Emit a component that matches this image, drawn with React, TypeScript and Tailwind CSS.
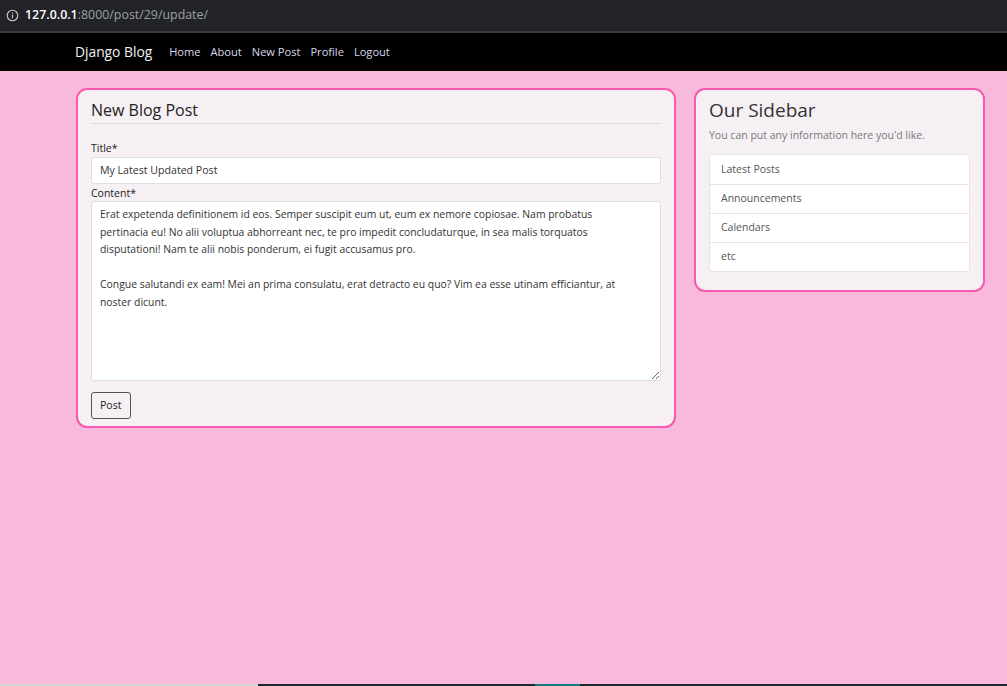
import React from "react";

export default function App() {
  const font = { fontFamily: '"Segoe UI", "Open Sans", "Noto Sans", sans-serif' };
  const content =
    "Erat expetenda definitionem id eos. Semper suscipit eum ut, eum ex nemore copiosae. Nam probatus pertinacia eu! No alii voluptua abhorreant nec, te pro impedit concludaturque, in sea malis torquatos disputationi! Nam te alii nobis ponderum, ei fugit accusamus pro.\n\nCongue salutandi ex eam! Mei an prima consulatu, erat detracto eu quo? Vim ea esse utinam efficiantur, at noster dicunt.";
  return (
    <div className="w-[1007px] h-[686px] flex flex-col bg-[#f8b9dc] overflow-hidden" style={font}>
      {/* address bar */}
      <div className="h-[33px] bg-[#222326] flex items-center pl-[6px] border-b-2 border-[#3a3b3e] shrink-0">
        <svg width="13" height="13" viewBox="0 0 16 16" className="mr-[6px]">
          <circle cx="8" cy="8" r="6.5" fill="none" stroke="#c8c8c8" strokeWidth="1.4" />
          <rect x="7.3" y="7" width="1.4" height="4.5" fill="#c8c8c8" />
          <rect x="7.3" y="4.3" width="1.4" height="1.5" fill="#c8c8c8" />
        </svg>
        <span className="text-[12.4px] text-white font-semibold">127.0.0.1</span>
        <span className="text-[12.4px] text-[#9aa0a6]">:8000/post/29/update/</span>
      </div>
      {/* navbar */}
      <div className="h-[38px] bg-black flex items-center pl-[75px] shrink-0">
        <span className="text-[13.8px] text-[#f2f2f2] mr-[17px]">Django Blog</span>
        <div className="flex gap-[10px] text-[11.1px] text-[#d8d8e8]">
          <span>Home</span>
          <span>About</span>
          <span>New Post</span>
          <span>Profile</span>
          <span>Logout</span>
        </div>
      </div>
      {/* main */}
      <div className="flex items-start pl-[76px] pt-[17px] gap-[18px]">
        <div className="w-[600px] bg-[#f6f0f5] border-2 border-[#f659b0] rounded-[11px] px-[13px] pt-[9px] pb-[7px]">
          <div className="text-[16px] text-[#222] pb-[2px] border-b border-[#e2dde2] leading-[22px]">New Blog Post</div>
          <div className="text-[10.5px] text-[#222] mt-[17px] leading-[14px]">Title*</div>
          <div className="mt-[2px] h-[27px] bg-white border border-[#dedede] rounded-[3px] flex items-center px-[8px] text-[10.6px] text-[#333]">
            My Latest Updated Post
          </div>
          <div className="text-[10.5px] text-[#222] mt-[2px] leading-[14px]">Content*</div>
          <textarea
            readOnly
            value={content}
            className="mt-[1px] block w-full h-[180px] bg-white border border-[#dedede] rounded-[3px] pl-[8px] pr-[24px] pt-[4px] text-[10.4px] leading-[17.5px] text-[#333] resize-y outline-none"
            style={font}
          />
          <button className="mt-[11px] h-[27px] px-[8px] border border-[#555] rounded-[3px] text-[10.6px] text-[#222] bg-transparent">
            Post
          </button>
        </div>
        <div className="w-[291px] bg-[#f6f0f5] border-2 border-[#f659b0] rounded-[11px] px-[13px] pt-[8px] pb-[18px]">
          <div className="text-[19px] text-[#333] leading-[24px]">Our Sidebar</div>
          <div className="text-[10.5px] text-[#777] mt-[6px] leading-[14px]">You can put any information here you'd like.</div>
          <div className="mt-[12px] bg-white border border-[#e6e2e6] rounded-[3px] text-[10.5px] text-[#555]">
            {["Latest Posts", "Announcements", "Calendars", "etc"].map((t, i) => (
              <div key={t} className={"h-[29px] flex items-center px-[11px] " + (i > 0 ? "border-t border-[#e6e2e6]" : "")}>
                {t}
              </div>
            ))}
          </div>
        </div>
      </div>
      <div className="flex-1" />
      <div className="h-[2px] flex shrink-0">
        <div className="w-[258px] bg-[#d4d4d4]" />
        <div className="w-[277px] bg-[#1c2a30]" />
        <div className="w-[45px] bg-[#137a80]" />
        <div className="flex-1 bg-[#1c2a30]" />
      </div>
    </div>
  );
}
